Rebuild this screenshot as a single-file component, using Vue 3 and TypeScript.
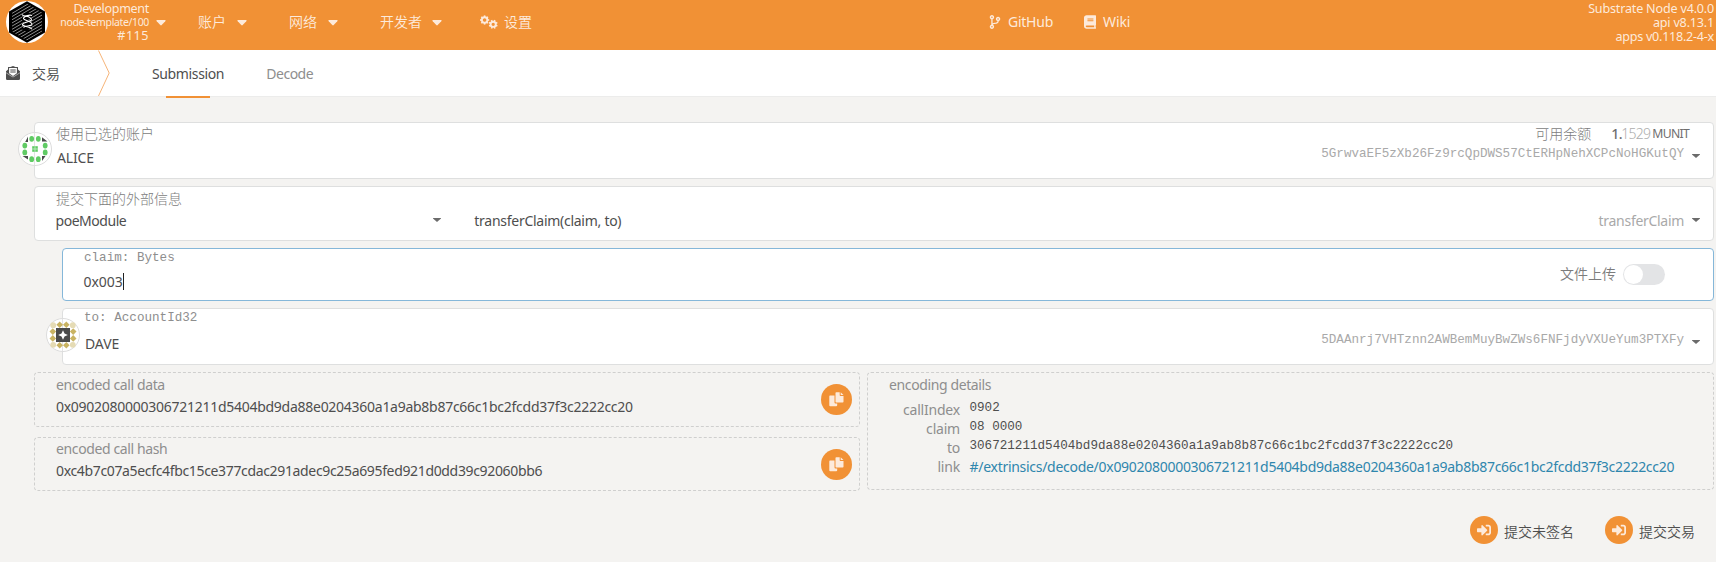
<script setup lang="ts">
interface MenuItem { label: string; gap: string }

const menu: MenuItem[] = [
  { label: '账户', gap: 'm1' },
  { label: '网络', gap: 'm2' },
  { label: '开发者', gap: 'm3' },
]

const callData = '0x0902080000306721211d5404bd9da88e0204360a1a9ab8b87c66c1bc2fcdd37f3c2222cc20'
const callHash = '0xc4b7c07a5ecfc4fbc15ce377cdac291adec9c25a695fed921d0dd39c92060bb6'

const encoded = [
  { label: 'encoded call data', value: callData, kind: 'data' },
  { label: 'encoded call hash', value: callHash, kind: 'hash' },
]

const details = [
  { key: 'callIndex', value: '0902' },
  { key: 'claim', value: '08 0000' },
  { key: 'to', value: '306721211d5404bd9da88e0204360a1a9ab8b87c66c1bc2fcdd37f3c2222cc20' },
]

const ovals: [number, number][] = [
  [-3.3, -10.2], [3.3, -10.2], [-3.3, 10.2], [3.3, 10.2],
  [-10.2, -3.4], [-10.2, 3.4], [10.2, -3.4], [10.2, 3.4],
]
const hatch = Array.from({ length: 15 }, (_, i) => -8 + i * 3.2)
const teeth = [0, 45, 90, 135, 180, 225, 270, 315]
const signPath = 'M416 448h-84c-6.6 0-12-5.4-12-12v-40c0-6.6 5.4-12 12-12h84c17.7 0 32-14.3 32-32V160c0-17.7-14.3-32-32-32h-84c-6.6 0-12-5.4-12-12V76c0-6.6 5.4-12 12-12h84c53 0 96 43 96 96v192c0 53-43 96-96 96zm-47-201L201 79c-15-15-41-4.5-41 17v96H24c-13.3 0-24 10.7-24 24v96c0 13.3 10.7 24 24 24h136v96c0 21.5 26 32 41 17l168-168c9.3-9.4 9.3-24.6 0-34z'
const actions = ['提交未签名', '提交交易']
</script>

<template>
  <div class="app">
    <header class="top">
      <svg class="logo" viewBox="0 0 42 42">
        <defs><clipPath id="hex"><path d="M21 2.5 36 11.5V30.5L21 39.5 6 30.5V11.5Z" /></clipPath></defs>
        <circle cx="21" cy="21" r="21" fill="#fff" />
        <path d="M21 .3 39 10.6V31.4L21 41.7 3 31.4V10.6Z" fill="#000" />
        <g clip-path="url(#hex)" stroke="#b4b4b4" stroke-width=".8">
          <line v-for="y in hatch" :key="y" x1="3" :y1="y + 12.5" x2="39" :y2="y - 8.5" />
        </g>
        <path d="M21 10.5 27 14 22 19 27 23 21 31 15 28 19 23 15 18Z" fill="#000" />
        <g fill="none" stroke="#fff" stroke-width="1.1">
          <path d="M16 13.5c1.500 2.600 4.500 1 6.500 2.200s3.500 1.800 3 3.300-8.500 2.200-9 4.500 7.500 1.500 9.500 4.800" />
          <path d="M26 14.500c-2.500-1-7.500.5-8.500 2.500s8 3.500 8.500 6-7.500 1.500-8.500 3.500" />
        </g>
      </svg>
      <div class="chain">
        <div class="chain-name">Development</div>
        <div class="chain-spec">node-template/100</div>
        <div class="chain-best">#115</div>
      </div>
      <svg class="caret" viewBox="0 0 10 6"><path d="M1 0H9Q10.200 .2 9.300 1.200L5.700 5.100Q5 5.800 4.300 5.100L.7 1.200Q-.2 .2 1 0Z" /></svg>
      <div v-for="m in menu" :key="m.label" class="menu" :class="m.gap">
        <span>{{ m.label }}</span>
        <svg class="caret" viewBox="0 0 10 6"><path d="M1 0H9Q10.200 .2 9.300 1.200L5.700 5.100Q5 5.800 4.300 5.100L.7 1.200Q-.2 .2 1 0Z" /></svg>
      </div>
      <div class="settings">
        <svg viewBox="0 0 18 14">
          <g transform="translate(4.600 5)">
            <circle r="2.700" fill="none" stroke="currentColor" stroke-width="1.900" />
            <rect v-for="a in teeth" :key="a" x="-.8" y="-4.600" width="1.600" height="1.600" :transform="`rotate(${a})`" fill="currentColor" />
          </g>
          <g transform="translate(13.200 9.300)">
            <circle r="2.600" fill="none" stroke="currentColor" stroke-width="1.900" />
            <rect v-for="a in teeth" :key="a" x="-.8" y="-4.500" width="1.600" height="1.600" :transform="`rotate(${a + 22})`" fill="currentColor" />
          </g>
        </svg>
        <span>设置</span>
      </div>
      <div class="ext github">
        <svg viewBox="0 0 384 512"><path fill-rule="evenodd" d="M384 144c0-44.200-35.800-80-80-80s-80 35.800-80 80c0 36.400 24.300 67.100 57.500 76.800-.6 16.100-4.200 28.500-11 36.900-15.400 19.200-49.300 22.400-85.200 25.700-28.200 2.600-57.400 5.400-81.300 16.900v-144c32.500-10.200 56-40.500 56-76.300 0-44.200-35.800-80-80-80S0 35.800 0 80c0 35.800 23.500 66.100 56 76.300v199.300C23.500 365.900 0 396.200 0 432c0 44.200 35.800 80 80 80s80-35.800 80-80c0-34-21.200-63.100-51.200-74.600 3.100-5.200 7.800-9.800 14.900-13.400 16.200-8.200 40.400-10.400 66.100-12.800 42.200-3.900 90-8.400 118.200-43.400 14-17.400 21.100-39.800 21.600-67.900 31.600-10.800 54.400-40.700 54.400-75.900zM80 52a28 28 0 1 1 0 56 28 28 0 1 1 0-56zM80 404a28 28 0 1 1 0 56 28 28 0 1 1 0-56zM304 116a28 28 0 1 1 0 56 28 28 0 1 1 0-56z" /></svg>
        <span>GitHub</span>
      </div>
      <div class="ext wiki">
        <svg viewBox="0 0 448 512"><path d="M448 360V24c0-13.300-10.700-24-24-24H96C43 0 0 43 0 96v320c0 53 43 96 96 96h328c13.300 0 24-10.700 24-24v-16c0-7.500-3.500-14.300-8.900-18.700-4.200-15.400-4.200-59.300 0-74.700 5.400-4.300 8.900-11.100 8.900-18.600zM128 134c0-3.300 2.700-6 6-6h212c3.300 0 6 2.700 6 6v20c0 3.300-2.700 6-6 6H134c-3.300 0-6-2.700-6-6v-20zm0 64c0-3.300 2.700-6 6-6h212c3.300 0 6 2.700 6 6v20c0 3.300-2.700 6-6 6H134c-3.300 0-6-2.700-6-6v-20zm253.400 250H96c-17.700 0-32-14.300-32-32 0-17.600 14.400-32 32-32h285.400c-1.900 17.100-1.900 46.900 0 64z" /></svg>
        <span>Wiki</span>
      </div>
      <div class="versions">
        <div>Substrate Node v4.0.0</div>
        <div>api v8.13.1</div>
        <div class="apps">apps v0.118.2-4-x</div>
      </div>
    </header>

    <nav class="tabs">
      <svg class="env" viewBox="0 0 14 14">
        <path fill="#4e4e4e" d="M0 5.200 2 3.500V1.300Q2 .9 2.400 .9H4.500L7 0 9.500 .9H11.600Q12 .9 12 1.300V3.500L14 5.200V12.700Q14 14 12.700 14H1.300Q0 14 0 12.700Z" />
        <path fill="#fff" d="M3.100 2.100H10.900V7.200L7 9.900 3.100 7.200Z" />
        <path stroke="#4e4e4e" stroke-width="1" d="M4.300 4H9.700M4.300 6H9.700" />
        <path fill="none" stroke="#fff" stroke-width=".5" d="M0 6.700 6 10.600Q7 11.200 8 10.600L14 6.700" />
      </svg>
      <span class="section">交易</span>
      <svg class="chev" viewBox="0 0 12 46"><path d="M.5 .5 11.200 23 .5 46" /></svg>
      <span class="tab active">Submission</span>
      <span class="tab decode">Decode</span>
    </nav>

    <main>
      <section class="card account">
        <svg class="ident" viewBox="-17 -17 34 34">
          <circle r="16.500" fill="#fff" stroke="#dcdcdc" />
          <path stroke="#e4e4e4" d="M-.5-16V16" />
          <path fill="#4b4b4b" d="M-9.800-7-7-12.500V-7ZM7-11.800 12.500-7.500H7ZM-12.500 7H-7V10.500ZM7 7H10.500L7 12Z" />
          <ellipse v-for="(o, i) in ovals" :key="i" :cx="o[0]" :cy="o[1]" rx="2.400" ry="2.900" fill="#60cb64" />
          <path fill="#60cb64" d="M-2.800-2.800H2.800V2.800H-2.800Z" />
          <path stroke="#c9eecb" stroke-width=".8" d="M-2.800 0H2.800M0-2.800V2.800" />
        </svg>
        <div class="col">
          <div class="label">使用已选的账户</div>
          <div class="value name">ALICE</div>
        </div>
        <div class="right">
          <div class="balance"><span class="avail">可用余额</span><span class="int">1.</span><span class="frac">1529</span><span class="unit">MUNIT</span></div>
          <div class="address">5GrwvaEF5zXb26Fz9rcQpDWS57CtERHpNehXCPcNoHGKutQY</div>
        </div>
        <i class="drop" />
      </section>

      <section class="card extrinsic">
        <div class="col module">
          <div class="label">提交下面的外部信息</div>
          <div class="value pick"><span class="pm">poeModule</span><i class="drop" /></div>
        </div>
        <div class="value method">transferClaim(claim, to)</div>
        <div class="hint">transferClaim</div>
        <i class="drop" />
      </section>

      <section class="card param focus">
        <div class="col">
          <div class="label mono">claim: Bytes</div>
          <div class="value entry">0x003<i class="cursor" /></div>
        </div>
        <div class="upload">文件上传</div>
        <div class="toggle"><i /></div>
      </section>

      <section class="card param dest">
        <svg class="ident" viewBox="-17 -17 34 34">
          <circle r="16.500" fill="#fff" stroke="#dcdcdc" />
          <path stroke="#e4e4e4" d="M-.5-16V16" />
          <g fill="#e5dbb4">
            <circle cx="-9.800" cy="-9.800" r="2.900" /><circle cx="9.800" cy="-9.800" r="2.900" />
            <circle cx="-9.800" cy="9.800" r="2.900" /><circle cx="9.800" cy="9.800" r="2.900" />
          </g>
          <path v-for="(o, i) in ovals" :key="i" :transform="`translate(${o[0]} ${o[1]})`" d="M0-3.300 3.300 0 0 3.300-3.300 0Z" fill="#c9b362" />
          <rect x="-7" y="-7" width="14" height="14" fill="#4b4b4b" />
          <path fill="#fff" d="M0-4.800 1.500-1.500 4.800 0 1.500 1.500 0 4.800-1.500 1.500-4.800 0-1.500-1.500Z" />
        </svg>
        <div class="col">
          <div class="label mono">to: AccountId32</div>
          <div class="value name">DAVE</div>
        </div>
        <div class="right address">5DAAnrj7VHTznn2AWBemMuyBwZWs6FNFjdyVXUeYum3PTXFy</div>
        <i class="drop" />
      </section>

      <div class="outputs">
        <div class="left">
          <section v-for="e in encoded" :key="e.kind" class="out" :class="e.kind">
            <div class="col">
              <div class="label latin">{{ e.label }}</div>
              <div class="value hexv">{{ e.value }}</div>
            </div>
            <div class="copy">
              <svg viewBox="0 0 15 15">
                <path d="M1 3.500H5.500V10.500Q5.500 11.500 6.500 11.500H8.200V13.300Q8.200 14.300 7.200 14.300H1.200Q.3 14.300 .3 13.300V4.500Q.3 3.500 1 3.500Z" />
                <path d="M7.300 .3H10.700V3.300Q10.700 4 11.400 4H14.500V9.700Q14.500 10.500 13.700 10.500H7.300Q6.500 10.500 6.500 9.700V1.100Q6.500 .3 7.300 .3ZM11.700 .3 14.500 3H11.700Z" />
              </svg>
            </div>
          </section>
        </div>
        <section class="out info">
          <div class="label latin">encoding details</div>
          <div class="grid">
            <template v-for="d in details" :key="d.key">
              <span class="k">{{ d.key }}</span><span class="v">{{ d.value }}</span>
            </template>
            <span class="k">link</span><a class="link">#/extrinsics/decode/{{ callData }}</a>
          </div>
        </section>
      </div>

      <footer>
        <div v-for="a in actions" :key="a" class="action">
          <span class="disc"><svg viewBox="0 0 512 512"><path :d="signPath" /></svg></span>
          <span>{{ a }}</span>
        </div>
      </footer>
    </main>
  </div>
</template>

<style>
body { background: #f4f3f1; }
</style>

<style scoped>
.app {
  width: 1716px; height: 562px; overflow: hidden; background: #f4f3f1; color: #4e4e4e;
  font: 14px/20px "Noto Sans", "Noto Sans CJK SC", sans-serif; box-sizing: border-box;
}
.app * { box-sizing: border-box; }
svg { display: block; flex: none; }
span, .value, .label { white-space: nowrap; }

.top { height: 50px; background: #f19135; color: #fdeadb; display: flex; padding-left: 6px; }
.logo { width: 42px; height: 42px; margin-top: 1px; }
.chain { width: 101px; text-align: right; white-space: nowrap; font-size: 12.6px; line-height: 14px; padding-top: 2px; }
.chain-name { letter-spacing: -.35px; height: 13px; }
.chain-spec { font-size: 10.5px; letter-spacing: -.36px; height: 14px; }
.chain-best { letter-spacing: .5px; }
.caret { width: 10px; height: 6px; fill: currentColor; margin-top: 20px; }
.chain + .caret { margin-left: 7px; }
.menu { display: flex; line-height: 44px; font-weight: 350; }
.menu .caret { margin-left: 11px; }
.m1 { margin-left: 32px; }
.m2 { margin-left: 42px; }
.m3 { margin-left: 42px; }
.m3 .caret { margin-left: 10px; }
.settings { display: flex; line-height: 44px; margin-left: 38px; font-weight: 350; }
.settings svg { width: 18px; height: 14px; margin: 15px 6px 0 0; }
.ext { display: flex; line-height: 44px; letter-spacing: -.25px; }
.ext svg { height: 14px; margin-top: 15px; fill: currentColor; }
.github { margin-left: 457px; width: 95px; }
.github svg { width: 12px; margin-right: 7px; }
.wiki { letter-spacing: -.1px; }
.wiki svg { width: 12px; margin-right: 7px; }
.versions { margin-left: auto; text-align: right; padding: 2px 2px 0 0; font-size: 12.6px; line-height: 14px; letter-spacing: -.2px; white-space: nowrap; }
.apps { letter-spacing: -.26px; }

.tabs { height: 47px; background: #fff; border-bottom: 1px solid #ececeb; display: flex; padding-left: 6px; line-height: 47px; position: relative; }
.env { width: 14px; height: 14px; margin-top: 16px; }
.section { margin-left: 12px; line-height: 48px; font-weight: 350; }
.chev { width: 12px; height: 46px; margin-left: 37.500px; fill: none; stroke: #f6b478; stroke-width: 1; }
.tab { line-height: 48px; letter-spacing: -.37px; position: relative; height: 48px; }
.active { margin-left: 42.500px; width: 114.300px; }
.active::after { content: ""; position: absolute; left: 14px; top: 46px; width: 44px; height: 2px; background: #f19135; }
.decode { color: #8e8e8e; letter-spacing: -.5px; }

main { padding: 25px 2px 0 34px; }
.card { position: relative; display: flex; background: #fff; border: 1px solid #dedfdf; border-radius: 4px; padding-left: 21px; margin-bottom: 7px; }
.label { color: #7c7c7c; font-weight: 300; height: 20px; }
.mono { font: 12.6px/18px "Liberation Mono", monospace; color: #8e8e8e; }
.latin { font-weight: 400; letter-spacing: -.38px; color: #8e8e8e; }
.ident { position: absolute; left: -17px; width: 34px; height: 34px; }
.account { height: 57px; padding-top: 1px; }
.account .ident { top: 9px; }
.account .name { margin: 4px 0 0 1px; letter-spacing: -.15px; }
.right { margin-left: auto; }
.balance { height: 20px; display: flex; justify-content: flex-end; margin-right: -5px; color: #6e6e6e; }
.avail { color: #7c7c7c; font-weight: 300; margin-right: 20px; }
.int { letter-spacing: -.6px; width: 10px; font-weight: 500; }
.frac { font-weight: 300; letter-spacing: -.8px; color: #adadad; width: 31px; }
.unit { font-size: 12.200px; letter-spacing: -.7px; }
.address { font: 12.6px/20px "Liberation Mono", monospace; color: #a9a9a9; white-space: nowrap; }
.drop { width: 8px; height: 4px; background: #6b6b6b; clip-path: polygon(0 0, 100% 0, 100% 15%, 50% 100%, 0 15%); flex: none; }
.account > .drop { margin: 30px 13px 0 8px; }

.extrinsic { height: 55px; padding-top: 2px; }
.module { width: 418.300px; }
.pick { display: flex; margin: 2px 0 0 -.5px; }
.pm { letter-spacing: -.46px; width: 377.500px; }
.pick .drop { margin-top: 7px; }
.method { margin-top: 22px; letter-spacing: -.27px; }
.hint { margin: 22px 8px 0 auto; color: #a9a9a9; letter-spacing: -.3px; }
.extrinsic > .drop { margin: 29px 13px 0 0; }

.param { margin-left: 28px; }
.focus { height: 53px; border-color: #85b7d9; }
.entry { margin: 3px 0 0 -.5px; display: flex; letter-spacing: -.02px; }
.cursor { width: 1px; height: 17px; background: #222; margin-top: 1px; }
.upload { margin: 15px 7px 0 auto; color: #7c7c7c; font-weight: 350; }
.toggle { width: 42px; height: 21px; border-radius: 11px; background: #e3e4e6; margin: 15px 48px 0 0; padding: 1px; }
.toggle i { display: block; width: 19px; height: 19px; border-radius: 50%; background: #fff; }
.dest { height: 57px; }
.dest .ident { top: 9px; }
.dest .name { margin: 5px 0 0 1px; letter-spacing: -.1px; }
.dest .address { margin-top: 21px; }
.dest > .drop { margin: 31px 13px 0 8px; }

.outputs { display: flex; align-items: flex-start; gap: 7px; }
.left { width: 826px; }
.out { border: 1px dashed #cfcfce; border-radius: 4px; padding-left: 21px; }
.data { height: 55px; padding-top: 2px; display: flex; justify-content: space-between; }
.hash { height: 54px; margin-top: 10px; padding-top: 1px; display: flex; justify-content: space-between; }
.hexv { margin-top: 2px; letter-spacing: -.27px; }
.hash .hexv { letter-spacing: -.345px; }
.copy { width: 31px; height: 31px; border-radius: 50%; background: #f19135; margin: 9px 7px 0 0; display: flex; align-items: center; justify-content: center; }
.hash .copy { margin-top: 10px; }
.copy svg { width: 15px; height: 15px; fill: #fdeadb; }
.info { width: 847px; height: 118px; padding-top: 2px; }
.grid { display: grid; grid-template-columns: 71px auto; column-gap: 9.500px; grid-auto-rows: 19px; margin-top: 4px; justify-content: start; }
.k { color: #8e8e8e; text-align: right; letter-spacing: -.2px; line-height: 21px; }
.v { font: 12.6px/20px "Liberation Mono", monospace; margin-top: -1px; }
.link { color: #2f86ad; letter-spacing: -.285px; margin-top: 1px; white-space: nowrap; }

footer { display: flex; justify-content: flex-end; gap: 31px; padding: 25px 19px 0 0; }
.action { display: flex; gap: 6px; line-height: 31px; font-weight: 350; }
.disc { width: 28px; height: 28px; border-radius: 50%; background: #f19135; display: flex; align-items: center; justify-content: center; }
.disc svg { width: 14px; height: 14px; fill: #fdeadb; }
</style>
